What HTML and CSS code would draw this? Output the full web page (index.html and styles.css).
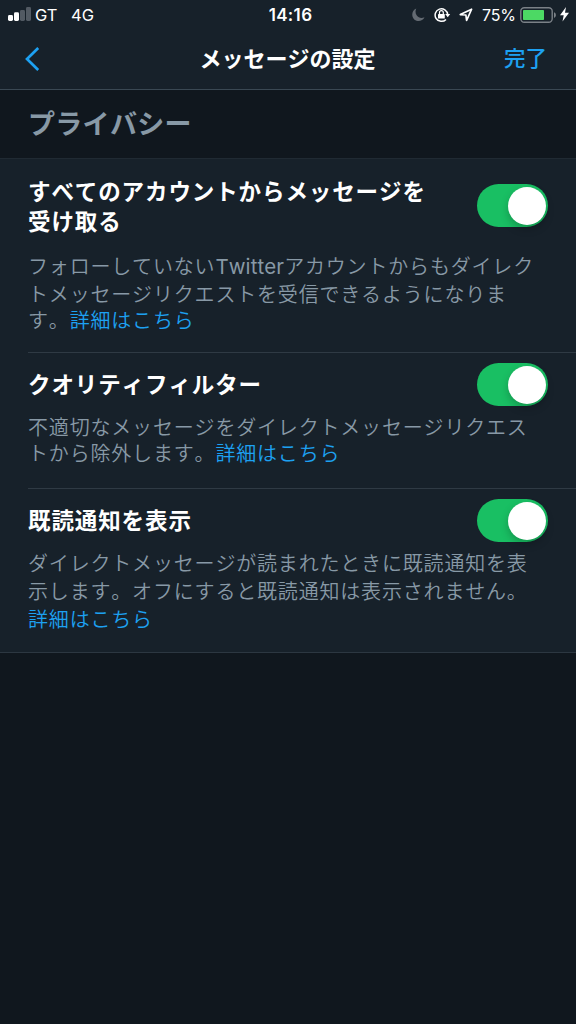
FILE: index.html
```html
<!DOCTYPE html>
<html lang="ja">
<head>
<meta charset="utf-8">
<title>メッセージの設定</title>
<link rel="stylesheet" href="styles.css">
</head>
<body>
<header class="top">
  <div class="status">
    <div class="status-left">
      <svg class="signal" width="24" height="16" viewBox="0 0 24 16"><g fill="#fff"><rect x="0" y="8" width="5" height="6" rx="1.4"/><rect x="6" y="5.300" width="5" height="8.700" rx="1.400"/></g><g fill="#525a63"><rect x="12" y="3" width="5" height="11" rx="1.400"/><rect x="18" y="0" width="5" height="14" rx="1.400"/></g></svg>
      <span class="carrier">GT</span><span class="network">4G</span>
    </div>
    <time class="clock">14:16</time>
    <div class="status-right">
      <svg class="moon" width="13" height="14" viewBox="0 0 13 14"><path d="M4.300 .5C-.4 2.300-1 8.700 2.500 11.700C5.800 14.300 10.700 13.200 12.500 9.300C9.500 10.500 6.500 10 4.800 7.500C3.200 5.200 3.200 2.700 4.300.5Z" fill="#646b73"/></svg>
      <svg class="lock" width="17" height="16" viewBox="0 0 17 16"><path d="M12 12.400A6.300 6.300 0 1 1 13.700 7.500" fill="none" stroke="#fff" stroke-width="1.500"/><path d="M11.200 7H16.200L13.700 10.200Z" fill="#fff"/><rect x="4" y="7" width="6.800" height="4.600" rx=".6" fill="#fff"/><path d="M5.500 7.300V5.600a1.900 1.900 0 0 1 3.800 0V7.300" fill="none" stroke="#fff" stroke-width="1.200"/></svg>
      <svg class="arrow" width="14" height="14" viewBox="0 0 14 14"><path d="M12.600 1.200L1.300 6.600L6.900 7L7.600 12.500Z" fill="none" stroke="#fff" stroke-width="1.700" stroke-linejoin="round"/></svg>
      <span class="percent">75%</span>
      <svg class="battery" width="37" height="16" viewBox="0 0 37 16"><rect x=".8" y=".8" width="31.400" height="14.400" rx="3.500" fill="none" stroke="#7b8187" stroke-width="1.400"/><rect x="3" y="3" width="21" height="10" rx=".8" fill="#4cd964"/><path d="M34 5.200C36.500 6 36.500 10 34 10.800Z" fill="#7b8187"/></svg>
      <svg class="bolt" width="9" height="15" viewBox="0 0 9 15"><path d="M6 0L0 8.200H3.700L2.500 14.500L9 5.800H5Z" fill="#fff"/></svg>
    </div>
  </div>
  <nav class="nav">
    <a class="back"><svg width="16" height="26" viewBox="0 0 16 26"><path d="M14.200 2L3 13L14.200 24" fill="none" stroke="#1da1f2" stroke-width="2.700"/></svg></a>
    <h1 class="title">メッセージの設定</h1>
    <a class="done">完了</a>
  </nav>
</header>
<h2 class="section">プライバシー</h2>
<main class="settings">
  <section class="row row-accounts">
    <div class="row-head"><h3 class="label">すべてのアカウントからメッセージを<br>受け取る</h3><span class="toggle"><span class="knob"></span></span></div>
    <p class="desc"><span class="line">フォローしていない<span class="latin">Twitter</span>アカウントからもダイレク</span><span class="line">トメッセージリクエストを受信できるようになりま</span><span class="line tight">す。<a class="link">詳細はこちら</a></span></p>
  </section>
  <section class="row row-quality">
    <div class="row-head"><h3 class="label">クオリティフィルター</h3><span class="toggle"><span class="knob"></span></span></div>
    <p class="desc"><span class="line">不適切なメッセージをダイレクトメッセージリクエス</span><span class="line tight">トから除外します。<a class="link">詳細はこちら</a></span></p>
  </section>
  <section class="row row-receipts">
    <div class="row-head"><h3 class="label">既読通知を表示</h3><span class="toggle"><span class="knob"></span></span></div>
    <p class="desc"><span class="line">ダイレクトメッセージが読まれたときに既読通知を表</span><span class="line">示します。オフにすると既読通知は表示されません。</span><span class="line"><a class="link">詳細はこちら</a></span></p>
  </section>
</main>
</body>
</html>
```
FILE: styles.css
```css
* { box-sizing: border-box; }
body { margin: 0; min-height: 1024px; background: #10171e; color: #fff; font-family: "Noto Sans CJK JP", sans-serif; white-space: nowrap; font-kerning: none; text-spacing-trim: space-all; }
h1, h2, h3, p { margin: 0; }
svg { display: block; flex: none; }
.top { height: 90px; background: #17212a; border-bottom: 1px solid #3a4853; }
.status { display: grid; grid-template-columns: 1fr auto 1fr; height: 28px; align-items: center; font: 16.5px/28px Inter, sans-serif; padding: 0 7px 0 8px; }
.status-left, .status-right { display: flex; align-items: center; height: 28px; }
.signal { margin-top: 1px; }
.carrier { margin: 1px 0 0 3px; width: 36px; }
.network { margin-top: 1px; }
.clock { font-weight: 600; font-size: 17px; letter-spacing: .35px; padding: 1px 0 0 4px; }
.status-right { justify-content: flex-end; }
.lock { margin-left: 9px; }
.arrow { margin-left: 8px; }
.percent { margin: 1px 0 0 9px; width: 33px; font-size: 16px; letter-spacing: -.2px; }
.battery { margin-left: 5px; }
.bolt { margin-left: 3px; }
.nav { display: grid; grid-template-columns: 1fr auto 1fr; align-items: center; height: 61px; padding: 0 29px 0 24px; }
.title { font-size: 22px; line-height: 30px; font-weight: 700; padding: 0 0 3px 4px; }
.done { justify-self: end; color: #1da1f2; font-size: 21.5px; line-height: 30px; font-weight: 500; padding-bottom: 3px; }
.section { height: 69px; padding: 13px 28px 0; color: #8899a6; font-size: 27px; line-height: 40px; letter-spacing: .3px; font-weight: 700; border-bottom: 1px solid #202a33; }
.settings { background: #17212a; border-bottom: 1px solid #2c3741; padding-left: 28px; }
.row { padding-right: 28px; }
.row + .row { border-top: 1px solid #2f3a44; margin-right: 0; }
.row-accounts { height: 193px; padding-top: 16px; }
.row-quality { height: 136px; padding-top: 10px; }
.row-receipts { height: 164px; padding-top: 10px; }
.row-head { display: flex; justify-content: space-between; align-items: center; min-height: 43px; }
.row-accounts .row-head { margin-bottom: 17px; }
.row-quality .row-head { margin-bottom: 7px; }
.row-receipts .row-head { margin-bottom: 7px; }
.label { font-size: 22.5px; line-height: 30px; letter-spacing: .9px; font-weight: 700; }
.row-quality .label, .row-receipts .label { padding-bottom: 3px; }
.toggle { display: flex; flex: none; width: 71px; height: 43px; padding: 3px 2px 3px 31px; border-radius: 22px; background: #19bf63; }
.knob { width: 38px; height: 38px; border-radius: 50%; background: #fff; box-shadow: 0 4px 8px rgba(0, 0, 0, .22); }
.desc { color: #8899a6; font-size: 20px; font-weight: 350; letter-spacing: .82px; }
.line { display: block; height: 28px; line-height: 28px; }
.tight { line-height: 24px; height: 26px; }
.latin { font-family: Inter, sans-serif; font-size: 20.5px; font-weight: 400; letter-spacing: .1px; line-height: 24px; }
.link { color: #1da1f2; }
```
